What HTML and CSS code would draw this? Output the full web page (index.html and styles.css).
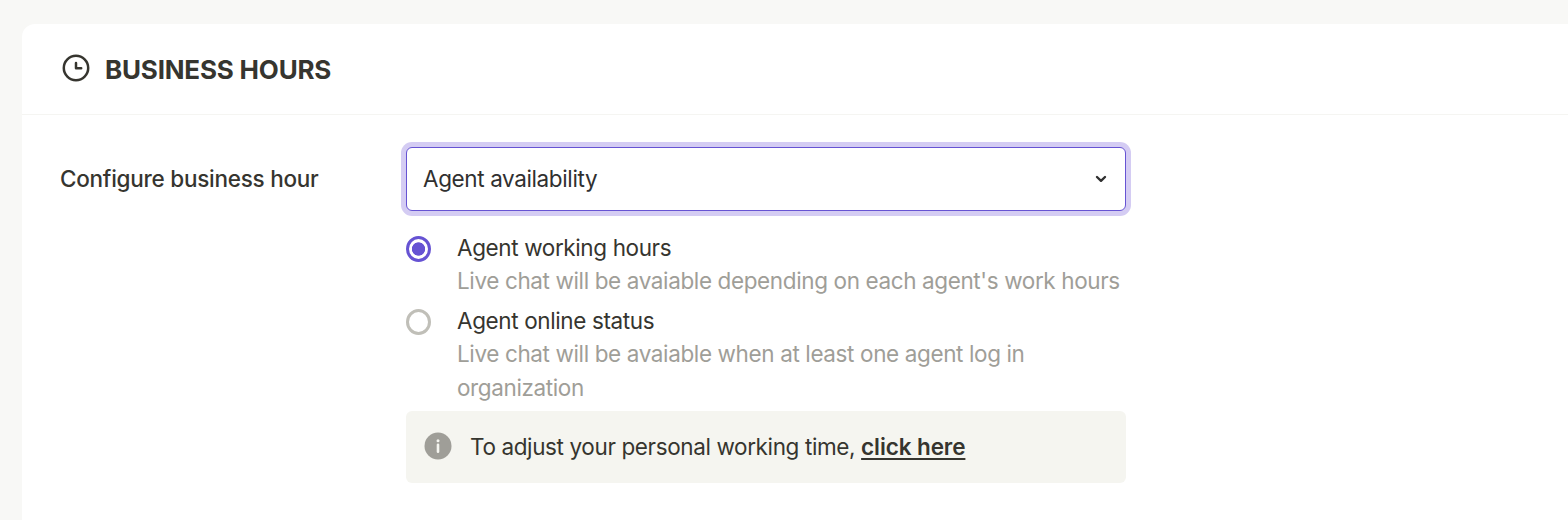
FILE: index.html
```html
<!DOCTYPE html>
<html lang="en">
<head>
    <meta charset="UTF-8">
    <meta name="viewport" content="width=device-width, initial-scale=1.0">
    <title>Business Hours</title>
    <link rel="stylesheet" href="styles.css">
</head>
<body>
    <div class="card">
        <header class="card-header">
            <svg class="clock-icon" viewBox="0 0 28 28" fill="none" stroke="currentColor" stroke-linecap="round" stroke-linejoin="round">
                <circle cx="14" cy="14" r="12.2" stroke-width="2.5"/>
                <path d="M14 9v5.3h5.2" stroke-width="2.5"/>
            </svg>
            <h1>BUSINESS HOURS</h1>
        </header>

        <div class="card-body">
            <div class="field-label">Configure business hour</div>

            <div class="field">
                <button type="button" class="select">
                    <span class="select-value">Agent availability</span>
                    <svg class="chevron" viewBox="0 0 12 8" fill="none" stroke="currentColor" stroke-width="2.4" stroke-linecap="round" stroke-linejoin="round">
                        <path d="M2 2l4 3.8L10 2"/>
                    </svg>
                </button>

                <div class="options">
                    <label class="option">
                        <input type="radio" name="availability" class="radio" checked>
                        <span class="option-text">
                            <span class="option-title">Agent working hours</span>
                            <span class="option-desc">Live chat will be avaiable depending on each agent's work hours</span>
                        </span>
                    </label>
                    <label class="option">
                        <input type="radio" name="availability" class="radio">
                        <span class="option-text">
                            <span class="option-title">Agent online status</span>
                            <span class="option-desc">Live chat will be avaiable when at least one agent log in organization</span>
                        </span>
                    </label>
                </div>

                <div class="notice">
                    <svg class="info-icon" viewBox="0 0 28 28">
                        <circle cx="14" cy="14" r="13.5" fill="#9f9e98"/>
                        <circle cx="14" cy="8.7" r="1.5" fill="#f5f5f0"/>
                        <path d="M14 12.7v7" stroke="#f5f5f0" stroke-width="2.6" stroke-linecap="round"/>
                    </svg>
                    <p>To adjust your personal working time, <a href="#">click here</a></p>
                </div>
            </div>
        </div>
    </div>
</body>
</html>
```

FILE: styles.css
```css
* {
    box-sizing: border-box;
}

body {
    margin: 0;
    padding: 24px 0 0 22px;
    height: 520px;
    overflow: hidden;
    background-color: #f8f8f6;
    color: #36352f;
    font-family: Inter, "Liberation Sans", sans-serif;
    font-size: 22.5px;
    letter-spacing: -0.38px;
    line-height: 33.6px;
}

/* Card */
.card {
    height: 520px;
    background-color: #fff;
    border-top-left-radius: 13px;
}

.card-header {
    display: flex;
    align-items: center;
    height: 91px;
    padding-left: 40px;
    border-bottom: 1px solid #f5f5f2;
}

.card-header h1 {
    margin: 2px 0 0 15px;
    font-size: 26px;
    font-weight: 700;
    letter-spacing: -0.2px;
}

.clock-icon {
    width: 28px;
    height: 28px;
    margin-bottom: 2px;
}

.card-body {
    display: flex;
    padding: 32px 0 0 38px;
}

.field-label {
    width: 346px;
    line-height: 64px;
    font-weight: 500;
    letter-spacing: -0.26px;
}

.field {
    width: 720px;
}

/* Select */
.select {
    display: flex;
    align-items: center;
    justify-content: space-between;
    width: 100%;
    height: 64px;
    padding: 0 18.5px 0 16px;
    border: 1px solid #6653d3;
    border-radius: 6px;
    background-color: #fff;
    box-shadow: 0 0 0 5px #d4ccf3;
    color: #303030;
    font: inherit;
    letter-spacing: inherit;
}

.chevron {
    width: 12px;
    height: 8px;
}

/* Radio options */
.options {
    display: flex;
    flex-direction: column;
    gap: 6px;
    padding-top: 19.6px;
}

.option {
    display: flex;
    align-items: flex-start;
}

.radio {
    flex: none;
    appearance: none;
    width: 25px;
    height: 26px;
    margin: 5px 26px 0 0;
    border: 3px solid #c0bfb8;
    border-radius: 50%;
    background-color: #fff;
}

.radio:checked {
    border-color: #6653d3;
    background: radial-gradient(circle, #6653d3 6.3px, #fff 7px);
}

.option-title,
.option-desc {
    display: block;
}

.option-desc {
    color: #9f9e98;
}

/* Notice */
.notice {
    display: flex;
    align-items: center;
    height: 72px;
    margin-top: 6.4px;
    padding-left: 17.5px;
    border-radius: 6px;
    background-color: #f5f5f0;
}

.info-icon {
    width: 28px;
    height: 28px;
    margin: 0 18.5px 2px 0;
}

.notice p {
    margin: 0;
}

.notice a {
    color: inherit;
    font-weight: 600;
    letter-spacing: -0.1px;
    text-decoration-thickness: 2px;
    text-underline-offset: 3px;
}
```
